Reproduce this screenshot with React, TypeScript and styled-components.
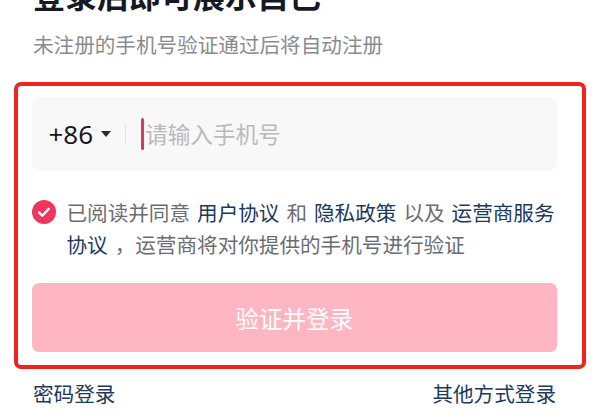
import React from "react";
import styled, { createGlobalStyle } from "styled-components";

const GlobalStyle = createGlobalStyle`
  html, body {
    margin: 0;
    padding: 0;
    background: #ffffff;
    overflow: hidden;
  }

  body {
    font-family: "Noto Sans CJK SC", "Noto Sans", sans-serif;
  }
`;

function App() {
  return (
    <>
      <GlobalStyle />
      <Page>
        <Header>
          <Title>登录后即可展示自己</Title>
          <Subtitle>未注册的手机号验证通过后将自动注册</Subtitle>
        </Header>

        <HighlightBox>
          <PhoneField>
            <CountryCode>
              +86
              <Caret />
            </CountryCode>
            <Divider />
            <Cursor />
            <Placeholder>请输入手机号</Placeholder>
          </PhoneField>

          <Agreement>
            <CheckIcon viewBox="0 0 24 24">
              <circle cx="12" cy="12" r="12" fill="#f0365c" />
              <path
                d="M7 12.4l3.3 3.3 6.4-6.8"
                fill="none"
                stroke="#ffffff"
                strokeWidth="2.4"
                strokeLinecap="round"
                strokeLinejoin="round"
              />
            </CheckIcon>
            <AgreementText>
              <Line>
                <span>已阅读并同意</span>
                <Link>用户协议</Link>
                <span>和</span>
                <Link>隐私政策</Link>
                <span>以及</span>
                <Link $side="left">运营商服务</Link>
              </Line>
              <Line>
                <Link $side="right">协议</Link>
                <span>，运营商将对你提供的手机号进行验证</span>
              </Line>
            </AgreementText>
          </Agreement>

          <SubmitButton>验证并登录</SubmitButton>
        </HighlightBox>

        <Footer>
          <FooterLink>密码登录</FooterLink>
          <FooterLink>其他方式登录</FooterLink>
        </Footer>
      </Page>
    </>
  );
}

const Page = styled.div`
  width: 600px;
  height: 420px;
  display: flex;
  flex-direction: column;
`;

const Header = styled.div`
  padding-left: 33px;
  margin-top: -22px;
`;

const Title = styled.div`
  font-size: 32px;
  line-height: 32px;
  font-weight: 700;
  color: #161823;
  white-space: nowrap;
`;

const Subtitle = styled.div`
  margin-top: 20px;
  font-size: 20.6px;
  line-height: 28px;
  color: #8a8b91;
  white-space: nowrap;
`;

const HighlightBox = styled.div`
  margin: 24px 0 0 14px;
  width: 572px;
  box-sizing: border-box;
  border: 4.5px solid #f2231c;
  border-radius: 7px;
  padding: 11px 25px 13px 13.5px;
  display: flex;
  flex-direction: column;
`;

const PhoneField = styled.div`
  height: 73px;
  background: #f8f8f8;
  border-radius: 6px;
  display: flex;
  align-items: center;
  padding-left: 17px;
`;

const CountryCode = styled.div`
  display: flex;
  align-items: center;
  font-family: "Noto Sans", "Liberation Sans", sans-serif;
  font-size: 26px;
  color: #161823;
`;

const Caret = styled.span`
  margin-left: 8px;
  width: 0;
  height: 0;
  border-left: 5.5px solid transparent;
  border-right: 5.5px solid transparent;
  border-top: 6px solid #2a2b30;
`;

const Divider = styled.span`
  margin-left: 14px;
  width: 1px;
  height: 20px;
  background: #e6e6e8;
`;

const Cursor = styled.span`
  margin-left: 15px;
  width: 3px;
  height: 32px;
  border-radius: 2px;
  background: #e0335c;
`;

const Placeholder = styled.span`
  margin-left: 1px;
  font-size: 22.6px;
  color: #b9babd;
  white-space: nowrap;
`;

const Agreement = styled.div`
  margin-top: 26px;
  display: flex;
  align-items: flex-start;
`;

const CheckIcon = styled.svg`
  width: 24px;
  height: 24px;
  margin: 4px 11px 0 0;
  flex-shrink: 0;
`;

const AgreementText = styled.div`
  display: flex;
  flex-direction: column;
  font-size: 20.6px;
  line-height: 32px;
  color: #6b6c72;
`;

const Line = styled.div`
  white-space: nowrap;
`;

const Link = styled.span<{ $side?: "left" | "right" }>`
  color: #1b3a5c;
  padding-left: ${(p) => (p.$side === "right" ? 0 : 7)}px;
  padding-right: ${(p) => (p.$side === "left" ? 0 : 7)}px;
`;

const SubmitButton = styled.div`
  margin-top: 23px;
  height: 69px;
  border-radius: 7px;
  background: #feb6c3;
  color: #ffffff;
  font-size: 23.5px;
  display: flex;
  align-items: center;
  justify-content: center;
`;

const Footer = styled.div`
  display: flex;
  justify-content: space-between;
  padding: 10px 44px 0 33px;
`;

const FooterLink = styled.span`
  font-size: 20.6px;
  line-height: 28px;
  color: #1b3a5c;
`;

export default App;
